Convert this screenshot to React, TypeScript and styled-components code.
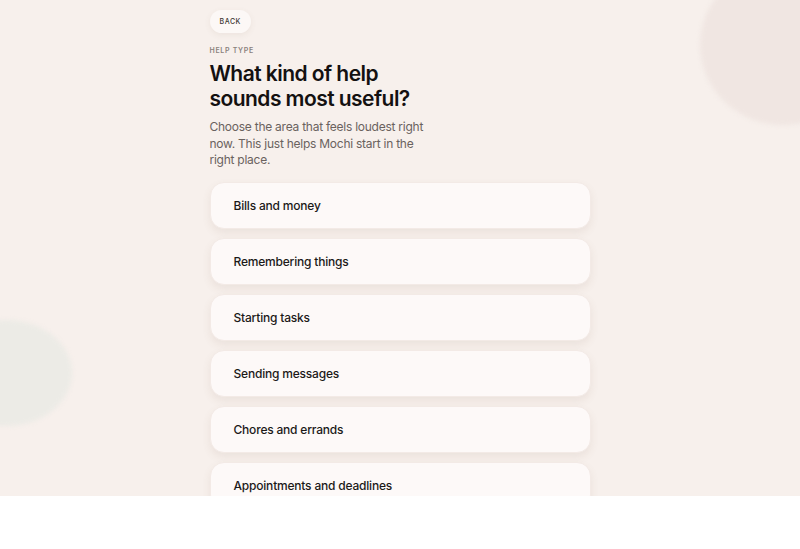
import React from "react";
import styled, { createGlobalStyle } from "styled-components";

const Global = createGlobalStyle`
  html, body { margin: 0; padding: 0; background: #ffffff; }
  * { box-sizing: border-box; }
  body { font-family: Inter, "Noto Sans", "Liberation Sans", sans-serif; -webkit-font-smoothing: antialiased; }
`;

const Screen = styled.div`
  position: relative;
  height: 496px;
  overflow: hidden;
  background: #f7f0ec;
`;

const Blob = styled.div<{ $top: number; $left: number; $w: number; $h: number; $color: string }>`
  position: absolute;
  top: ${(p) => p.$top}px;
  left: ${(p) => p.$left}px;
  width: ${(p) => p.$w}px;
  height: ${(p) => p.$h}px;
  border-radius: 50%;
  background: ${(p) => p.$color};
  filter: blur(2px);
`;

const Column = styled.main`
  position: relative;
  width: 381px;
  margin: 0 auto;
  padding-top: 10px;
  display: flex;
  flex-direction: column;
  align-items: flex-start;
`;

const BackButton = styled.button`
  height: 23px;
  padding: 0 10px;
  border: none;
  border-radius: 12px;
  background: #fcf8f6;
  box-shadow: 0 2px 6px rgba(120, 90, 70, 0.08);
  font-family: inherit;
  font-size: 7px;
  font-weight: 500;
  letter-spacing: 0.08em;
  color: #3d3633;
  cursor: pointer;
`;

const Eyebrow = styled.div`
  margin-top: 13px;
  font-size: 7px;
  font-weight: 600;
  letter-spacing: 0.1em;
  color: #8b827d;
  text-transform: uppercase;
`;

const Title = styled.h1`
  margin: 6px 0 0;
  max-width: 230px;
  font-size: 21px;
  line-height: 25px;
  font-weight: 600;
  letter-spacing: -0.55px;
  color: #141111;
`;

const Subtitle = styled.p`
  margin: 8px 0 0;
  max-width: 222px;
  font-size: 12px;
  line-height: 16.5px;
  letter-spacing: -0.25px;
  color: #6a625e;
`;

const List = styled.div`
  margin-top: 13px;
  width: 100%;
  display: flex;
  flex-direction: column;
  gap: 9px;
`;

const Option = styled.button`
  width: 100%;
  height: 47px;
  padding: 0 23px;
  border: 1px solid #f3eae6;
  border-radius: 14px;
  background: #fdf9f8;
  box-shadow: 0 4px 9px rgba(120, 90, 70, 0.09);
  display: flex;
  align-items: center;
  font-family: inherit;
  font-size: 12px;
  font-weight: 500;
  letter-spacing: -0.2px;
  color: #1c1918;
  text-align: left;
  cursor: pointer;
`;

const options = [
  "Bills and money",
  "Remembering things",
  "Starting tasks",
  "Sending messages",
  "Chores and errands",
  "Appointments and deadlines",
];

export default function App() {
  return (
    <>
      <Global />
      <Screen>
        <Blob $top={-35} $left={700} $w={165} $h={160} $color="#f0e6e2" />
        <Blob $top={320} $left={-60} $w={132} $h={106} $color="#ecebe6" />
        <Column>
          <BackButton>BACK</BackButton>
          <Eyebrow>Help type</Eyebrow>
          <Title>What kind of help sounds most useful?</Title>
          <Subtitle>
            Choose the area that feels loudest right now. This just helps Mochi start in the right place.
          </Subtitle>
          <List>
            {options.map((o) => (
              <Option key={o}>{o}</Option>
            ))}
          </List>
        </Column>
      </Screen>
    </>
  );
}
